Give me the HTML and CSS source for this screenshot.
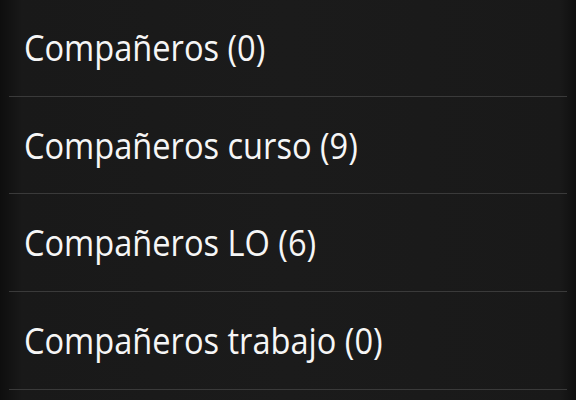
FILE: index.html
```html
<!DOCTYPE html>
<html lang="es">
<head>
<meta charset="utf-8">
<title>Grupos</title>
<link rel="stylesheet" href="styles.css">
</head>
<body>
<ul class="group-list">
  <li class="group-item"><span class="group-name">Compañeros (0)</span></li>
  <li class="group-item"><span class="group-name">Compañeros curso (9)</span></li>
  <li class="group-item"><span class="group-name">Compañeros LO (6)</span></li>
  <li class="group-item"><span class="group-name">Compañeros trabajo (0)</span></li>
</ul>
</body>
</html>
```
FILE: styles.css
```css
html, body {
  margin: 0;
  padding: 0;
  height: 100%;
}

body {
  background:
    linear-gradient(to right, #0e0e0e 0px, #191919 22px, #1b1b1b 50%, #191919 calc(100% - 16px), #0f0f0f 100%);
  font-family: "Open Sans", "Noto Sans", sans-serif;
  color: #f6f6f6;
  overflow: hidden;
}

.group-list {
  list-style: none;
  margin: -1px 0 0 0;
  padding: 0 9px;
}

.group-item {
  height: 94.67px;
  padding-top: 2px;
  border-bottom: 1px solid #3a3a3a;
  padding-left: 15px;
  font-size: 36px;
  line-height: 94px;
  white-space: nowrap;
}

/* slightly condensed label text */
.group-name {
  display: inline-block;
  transform: scaleX(0.905);
  transform-origin: left center;
}
```
